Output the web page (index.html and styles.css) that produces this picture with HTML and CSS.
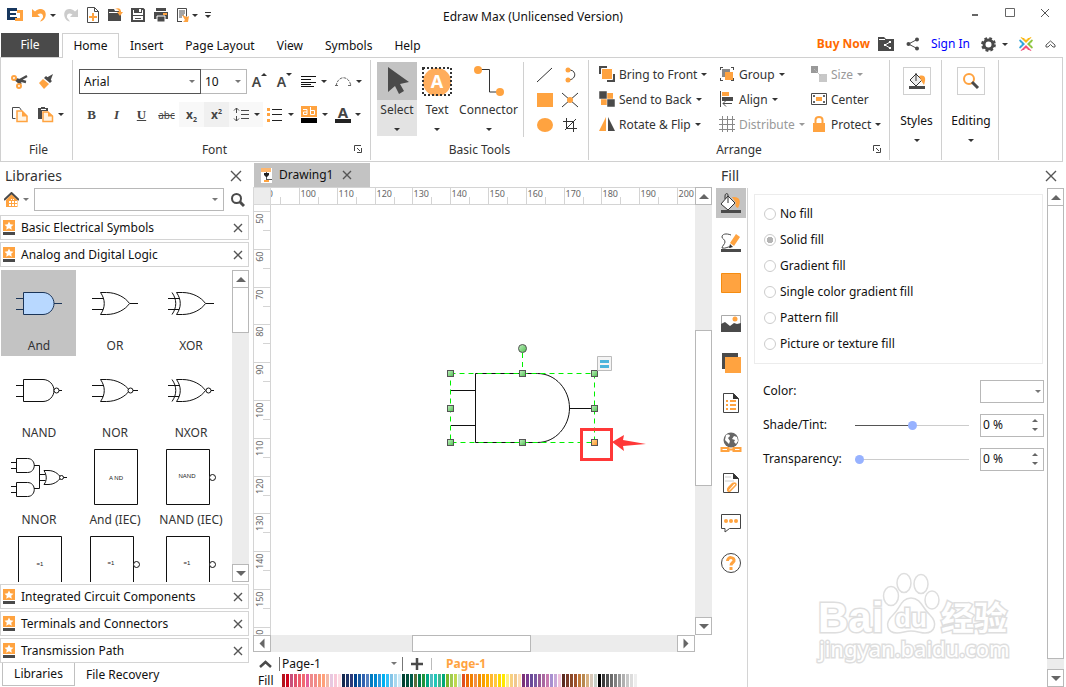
FILE: index.html
```html
<!DOCTYPE html>
<html lang="en">
<head>
<meta charset="utf-8">
<title>Edraw Max (Unlicensed Version)</title>
<link rel="stylesheet" href="styles.css">
</head>
<body>
<header class="titlebar">
  <div class="quick">
    <svg width="17" height="16"><path d="M0 1h10v3H3v2h6v2H3v2h7v3H0z" fill="#17375e"/><path d="M10 3h6v11h-8v-3h5V6h-3z" fill="#ffa340"/></svg>
    <button class="tool wide" aria-label="Undo"><svg width="17" height="16"><path d="M1 2v8h8L6.500 7.500c3-2 6-1 5.500 3l-3 4c7-1 8-12 1-12.500-2 0-4 .5-6 2.500z" fill="#ffa340"/></svg><i class="caret"></i></button>
    <button class="tool" aria-label="Redo"><svg width="16" height="16"><path d="M15 2v8H7l2.500-2.500c-3-2-6-1-5.500 3l3 4C0 13.500-1 2.500 6 2c2 0 4 .5 6 2.500z" fill="#ccc"/></svg></button>
    <button class="tool" aria-label="New"><svg width="14" height="16" fill="none" stroke="#4a4a4a"><path d="M1.500 .5h7l4 4v11h-11z M8.500 .5v4h4"/><path d="M7 6v8M3 10h8" stroke="#ffa340" stroke-width="2"/></svg></button>
    <button class="tool" aria-label="Open"><svg width="16" height="16"><path d="M1 2h6l1 2h6v10H1z" fill="#4a4a4a"/><path d="M2 5h10v1H2z" fill="#fff"/><path d="M8 2c4-2 6 0 6 3h2l-3 4-3-4h2c0-2-1-3-4-3z" fill="#ffa340"/></svg></button>
    <button class="tool" aria-label="Save"><svg width="16" height="16"><path d="M2 2h11l1 1v11H2z" fill="none" stroke="#4a4a4a" stroke-width="2"/><path d="M4 1h8v5H4zM3 8h10v1H3zM5 11h6v1H5z" fill="#4a4a4a"/><path d="M9 2h2v3H9z" fill="#fff"/></svg></button>
    <button class="tool" aria-label="Print"><svg width="16" height="16"><path d="M1 5h14v7H1zM3 1h10v3H3z" fill="#4a4a4a"/><path d="M4 9h8v6H4z" fill="#4a4a4a" stroke="#fff"/><path d="M10 6h4v2h-4z" fill="#ffa340"/></svg></button>
    <button class="tool wide" aria-label="Export"><svg width="14" height="16"><path d="M1.500 14.500v-13h9v8" fill="none" stroke="#4a4a4a"/><path d="M3 4h6M3 6h6M3 8h5M3 10h3M1 14.500h5" stroke="#4a4a4a"/><path d="M6 8l5 2 2-1-1 6H7l2-2z" fill="#ffa340"/></svg><i class="caret"></i></button>
    <button class="tool more" aria-label="Customize"><i class="caret"></i></button>
  </div>
  <h1>Edraw Max (Unlicensed Version)</h1>
  <div class="winbtns">
    <button class="tool" aria-label="Minimize"><svg width="10" height="10"><path d="M2 7h6" stroke="#666" stroke-width="2"/></svg></button>
    <button class="tool" aria-label="Maximize"><svg width="10" height="10"><path d="M.5.500h9v8h-9z" fill="none" stroke="#666"/></svg></button>
    <button class="tool" aria-label="Close"><svg width="10" height="10"><path d="M1 1l8 8M9 1l-8 8" stroke="#555"/></svg></button>
  </div>
</header>

<nav class="tabs">
  <button class="tab file">File</button>
  <button class="tab on">Home</button>
  <button class="tab">Insert</button>
  <button class="tab">Page Layout</button>
  <button class="tab">View</button>
  <button class="tab">Symbols</button>
  <button class="tab">Help</button>
  <div class="account">
    <a class="buy" href="#">Buy Now</a>
    <svg width="17" height="15"><path d="M0 0h6l2 2h8v12H0z" fill="#4a4a4a"/><path d="M1 2.500h6" stroke="#fff"/><path d="M12 5L7 8l5 3" stroke="#fff" fill="none"/><path d="M11 4h2v2h-2zM6 7h2v2H6zM11 10h2v2h-2z" fill="#fff"/></svg>
    <svg width="14" height="14"><path d="M11 2.500L2.500 7l8.500 4.500" fill="none" stroke="#4a4a4a"/><circle cx="11" cy="2.500" r="2" fill="#4a4a4a"/><circle cx="2.500" cy="7" r="2" fill="#4a4a4a"/><circle cx="11" cy="11.500" r="2" fill="#4a4a4a"/></svg>
    <a class="sign" href="#">Sign In</a>
    <button class="tool gear" aria-label="Settings"><svg width="15" height="15"><circle cx="7.500" cy="7.500" r="4.500" fill="none" stroke="#4a4a4a" stroke-width="3"/><circle cx="7.500" cy="7.500" r="6.200" fill="none" stroke="#4a4a4a" stroke-width="2.400" stroke-dasharray="2.700 2.170"/></svg><i class="caret"></i></button>
    <svg width="16" height="16"><path d="M3 1l2 1h6l2-1 1 2-6 5-6-5z" fill="#fdb813"/><path d="M1 4l3-1 4 5-4 5-3-1 1-2V6z" fill="#2fa5dc"/><path d="M15 4l-3-1-4 5 4 5 3-1-1-2V6z" fill="#8cc63f"/><path d="M3 15l2-1h6l2 1 1-2-6-5-6 5z" fill="#f0507a"/><path d="M2 2l12 12M14 2L2 14" stroke="#fff" stroke-width="1.500"/><circle cx="8" cy="2" r="1.800" fill="#fff"/><circle cx="2" cy="8" r="1.800" fill="#fff"/><circle cx="14" cy="8" r="1.800" fill="#fff"/><circle cx="8" cy="14" r="1.800" fill="#fff"/></svg>
    <button class="tool" aria-label="Collapse ribbon"><svg width="11" height="9" fill="none" stroke="#555"><path d="M1 5l4.500-4L10 5v2H8L5.500 4.500 3 7H1z"/></svg></button>
  </div>
</nav>

<section class="ribbon">
  <div class="group g-file">
    <div class="rows">
      <div class="row">
        <button class="tool c26" aria-label="Cut"><svg width="17" height="17"><path d="M16 3l-9 5M15 9L4 6l6 5" stroke="#4a4a4a" stroke-width="2.400" fill="none"/><circle cx="3" cy="5" r="2" fill="none" stroke="#ffa340" stroke-width="2"/><circle cx="8" cy="13" r="2" fill="none" stroke="#ffa340" stroke-width="2"/></svg></button>
        <button class="tool c26" aria-label="Format painter"><svg width="17" height="17"><path d="M15 1l-3 8-4-4z" fill="#4a4a4a"/><path d="M8 3l6 5-2 2-6-5z" fill="#4a4a4a"/><path d="M5 6l6 5-5 5-5-6z" fill="#ffa340"/></svg></button>
      </div>
      <div class="row">
        <button class="tool c26" aria-label="Copy"><svg width="17" height="17"><path d="M4.500 12.500h-3v-11h7l2 3" fill="none" stroke="#4a4a4a"/><path d="M6 5h5l5 5v5.500H6z" fill="#fff3e2" stroke="#ffa340" stroke-width="1.500"/><path d="M11 5v5.500h5.500z" fill="#ffa340"/></svg></button>
        <button class="tool c34" aria-label="Paste"><svg width="17" height="17"><path d="M1 2h3V1h4v1h3v3H5v8H1z" fill="#4a4a4a"/><path d="M4 3.500h5" stroke="#fff"/><path d="M6 6h5l4.500 4v5.500H6z" fill="#fff3e2" stroke="#ffa340" stroke-width="1.500"/><path d="M11 6v4.500h5z" fill="#ffa340"/></svg><i class="caret"></i></button>
      </div>
    </div>
    <div class="cap">File</div>
  </div>

  <div class="group g-font">
    <div class="rows">
      <div class="row">
        <span class="pick face"><select aria-label="Font"><option>Arial</option></select></span><span class="pick size"><select aria-label="Font size"><option>10</option></select></span>
        <button class="tool c25 gl" aria-label="Grow font"><b>A</b><i class="caret up"></i></button>
        <button class="tool c25 gl" aria-label="Shrink font"><b>A</b><i class="caret"></i></button>
        <button class="tool c34" aria-label="Align text"><svg width="16" height="14"><path d="M0 1.500h15M0 4.500h10M0 7.500h15M0 9.500h10M0 11.500h13" stroke="#111"/></svg><i class="caret"></i></button>
        <button class="tool c34" aria-label="Text path"><svg width="17" height="12"><path d="M1 10C3 -1 14 -1 16 10M0 9.500h4M13 9.500h4" fill="none" stroke="#666" stroke-dasharray="3 1"/></svg><i class="caret"></i></button>
      </div>
      <div class="row">
        <button class="tool c25 serif"><b>B</b></button>
        <button class="tool c25 serif"><em>I</em></button>
        <button class="tool c25 serif"><u>U</u></button>
        <button class="tool c25 strike"><s>abc</s></button>
        <button class="tool c25 sc t1"><b>x<sub>2</sub></b></button>
        <button class="tool c25 sc t2"><b>x<sup>2</sup></b></button>
        <button class="tool c34 t1" aria-label="Line spacing"><svg width="17" height="15"><path d="M3.500 1v5M3.500 9v5M1 3.500l2.500-2.500L6 3.500M1 11.500L3.500 14 6 11.500M8 3.500h8M8 7.500h8M8 11.500h8" fill="none" stroke="#4a4a4a"/></svg><i class="caret"></i></button>
        <button class="tool c34" aria-label="Bullets"><svg width="17" height="14"><path d="M0 0h3v3H0zM0 5h3v3H0zM0 11h3v3H0z" fill="#ffa340"/><path d="M5 1.500h10M5 6.500h10M5 12.500h10" stroke="#222"/></svg><i class="caret"></i></button>
        <button class="tool c34" aria-label="Highlight"><svg width="17" height="17"><path d="M0 0h16v11H0z" fill="#ffa340"/><path d="M0 12h16v5H0z" fill="#000"/><path d="M2 3.500h4v5H2.500v-2.500H6M9.500 1v7.500h4v-4h-4" fill="none" stroke="#fff"/></svg><i class="caret"></i></button>
        <button class="tool c34 fc" aria-label="Font color"><b>A</b><i class="caret"></i></button>
      </div>
    </div>
    <div class="cap">Font</div>
    <button class="tool launch" aria-label="Font dialog"><svg width="8" height="8"><path d="M.5 6V.5H7M3 3l3 3M7.500 3v4.500H3" fill="none" stroke="#444"/></svg></button>
  </div>

  <div class="group g-basic">
    <div class="big-row">
      <button class="big w40 sel"><svg width="26" height="32"><path d="M4 2v25l7-6 4 8 5-3-4-7 9-2z" fill="#4a4a4a"/></svg><span>Select</span><i class="caret"></i></button>
      <button class="big w40"><svg width="32" height="32"><circle cx="16" cy="17" r="14" fill="#ffad5c"/><path d="M2 3h28v27H2z" fill="none" stroke="#333" stroke-width="2" stroke-dasharray="2 2"/><text x="16" y="23" text-anchor="middle" class="bigA">A</text></svg><span>Text</span><i class="caret"></i></button>
      <button class="big w63"><svg width="32" height="32"><path d="M5 4.500h11.500V27H27" fill="none" stroke="#333"/><circle cx="5" cy="5" r="4" fill="#ffa340"/><circle cx="27" cy="27" r="4" fill="#ffa340"/></svg><span>Connector</span><i class="caret"></i></button>
      <div class="shapes">
        <button class="tool" aria-label="Line"><svg width="16" height="16"><path d="M0 15L15 1" stroke="#333"/></svg></button>
        <button class="tool" aria-label="Arc"><svg width="16" height="16"><path d="M6 3c9-1 9 10 0 10" fill="none" stroke="#333"/><circle cx="6" cy="3" r="2.500" fill="#ffa340"/><circle cx="6" cy="13" r="2.500" fill="#ffa340"/></svg></button>
        <button class="tool" aria-label="Rectangle"><svg width="16" height="16"><path d="M0 1h16v14H0z" fill="#ffa340"/></svg></button>
        <button class="tool" aria-label="Connection point"><svg width="16" height="16"><path d="M0 1l16 14M16 1L0 15" stroke="#333"/><circle cx="8" cy="8" r="3" fill="#ffa340"/></svg></button>
        <button class="tool" aria-label="Ellipse"><svg width="16" height="16"><ellipse cx="8" cy="8" rx="8" ry="7" fill="#ffa340"/></svg></button>
        <button class="tool" aria-label="Crop"><svg width="16" height="16"><path d="M4.500 1v10.500H15M1 4.500h10.500V15M3 13L14 2" fill="none" stroke="#333"/></svg></button>
      </div>
    </div>
    <div class="cap">Basic Tools</div>
  </div>

  <div class="group g-arr">
    <div class="arr">
      <button class="cmd"><svg width="16" height="16"><path d="M0 0h8v8H0zM8 8h8v8H8z" fill="#4a4a4a"/><path d="M2.500 2.500h11v11h-11z" fill="#ffa340" stroke="#fff"/></svg>Bring to Front<i class="caret"></i></button>
      <button class="cmd"><svg width="16" height="16"><path d="M1 1h3v1H2v2H1zM12 1h3v3h-1V2h-2zM1 12h1v2h2v1H1zM14 12h1v3h-3v-1h2z" fill="#4a4a4a"/><path d="M3 3h8v8H3z" fill="#888"/><path d="M6 6h8v8H6z" fill="#ffa340"/></svg>Group<i class="caret"></i></button>
      <button class="cmd off"><svg width="16" height="16"><path d="M0 0h7v7H0z" fill="#999"/><path d="M8 8h8v8H8z" fill="#c8c8c8"/><path d="M3 3l7 7" stroke="#bbb" stroke-dasharray="2 1"/></svg>Size<i class="caret"></i></button>
      <button class="cmd"><svg width="16" height="16"><path d="M2 2h12v12H2z" fill="#ffa340"/><path d="M0 0h8v8H0zM8 8h8v8H8z" fill="#4a4a4a" stroke="#fff" stroke-width=".5"/></svg>Send to Back<i class="caret"></i></button>
      <button class="cmd"><svg width="16" height="16"><path d="M1.500 0v16M4 12.500h9M4 12.500l3-3M4 12.500l3 3" stroke="#4a4a4a"/><path d="M3 1h7v4H3z" fill="#ffa340"/><path d="M3 6h11v4H3z" fill="#4a4a4a"/></svg>Align<i class="caret"></i></button>
      <button class="cmd"><svg width="16" height="16"><path d="M.5 2.500h15v11H.5z" fill="none" stroke="#4a4a4a"/><path d="M5 6h6v4H5z" fill="#ffa340"/><path d="M2 4h2v2H2zM12 4h2v2h-2zM2 10h2v2H2zM12 10h2v2h-2z" fill="#666"/></svg>Center</button>
      <button class="cmd"><svg width="16" height="16"><path d="M0 15L7 1v14z" fill="#ffa340"/><path d="M9 1l7 14H9z" fill="#4a4a4a"/></svg>Rotate &amp; Flip<i class="caret"></i></button>
      <button class="cmd off"><svg width="16" height="16"><path d="M0 3.500h16M0 8.500h16M0 13.500h16M3.500 0v16M8.500 0v16M13.500 0v16" stroke="#888"/></svg>Distribute<i class="caret"></i></button>
      <button class="cmd"><svg width="16" height="16"><path d="M2 7h12v9H2z" fill="#ffa340"/><path d="M4.500 8V4c0-4 7-4 7 0v4" fill="none" stroke="#ffa340" stroke-width="2"/></svg>Protect<i class="caret"></i></button>
    </div>
    <div class="cap">Arrange</div>
    <button class="tool launch" aria-label="Arrange dialog"><svg width="8" height="8"><path d="M.5 6V.5H7M3 3l3 3M7.500 3v4.500H3" fill="none" stroke="#444"/></svg></button>
  </div>

  <button class="group drop w52"><span class="frame"><svg width="18" height="18"><path d="M8 2l6 6-6 6-6-6z" fill="#eee" stroke="#333"/><path d="M8 9V1" stroke="#333"/><path d="M11 4c7-2 7 3 5 9l-2-3z" fill="#ffa340"/><path d="M1 14h16v3H1z" fill="#4a4a4a"/></svg></span><span>Styles</span><i class="caret"></i></button>
  <button class="group drop w57"><span class="frame"><svg width="18" height="18"><circle cx="7" cy="7" r="5" fill="none" stroke="#ffa340" stroke-width="2"/><path d="M10 10l6 6" stroke="#4a4a4a" stroke-width="3"/></svg></span><span>Editing</span><i class="caret"></i></button>
</section>

<main class="work">
  <aside class="left">
    <div class="phead"><h2>Libraries</h2><button class="tool" aria-label="Close libraries"><svg class="x" width="12" height="12"><path d="M1 1l10 10M11 1L1 11"/></svg></button></div>
    <div class="search">
      <button class="tool home" aria-label="Home"><svg width="15" height="16"><path d="M7.500 2l6 6v7H2V8z" fill="#ffa340"/><path d="M0 8l7.500-7L15 8" fill="none" stroke="#4a4a4a" stroke-width="2"/><path d="M7 7h1v1H7zM9 7h1v1H9zM5 9h2v2H5zM8 9h2v2H8zM11 9h2v2h-2zM5 12h2v2H5zM8 12h2v2H8zM11 12h2v2h-2z" fill="#fff"/></svg><i class="caret"></i></button>
      <span class="pick grow"><input type="text" aria-label="Search libraries"></span>
      <button class="tool" aria-label="Search"><svg width="15" height="16"><circle cx="6.500" cy="6.500" r="4.500" fill="none" stroke="#4a4a4a" stroke-width="2"/><path d="M10 10l4 4" stroke="#4a4a4a" stroke-width="3"/></svg></button>
    </div>
    <div class="lib"><svg class="book" width="12" height="15"><use href="#book"/></svg><span>Basic Electrical Symbols</span><button class="tool" aria-label="Close"><svg class="x" width="8" height="8"><path d="M0 0l8 8M8 0L0 8"/></svg></button></div>
    <div class="lib"><svg class="book" width="12" height="15"><use href="#book"/></svg><span>Analog and Digital Logic</span><button class="tool" aria-label="Close"><svg class="x" width="8" height="8"><path d="M0 0l8 8M8 0L0 8"/></svg></button></div>
    <div class="stencils">
      <div class="cells">
        <button class="cell picked"><span><svg width="48" height="25" class="gate"><use href="#and"/></svg></span>And</button>
        <button class="cell"><span><svg width="48" height="25" class="gate"><use href="#or"/></svg></span>OR</button>
        <button class="cell"><span><svg width="48" height="25" class="gate"><use href="#or"/><path d="M5 1.500c5 7 5 15 0 22"/></svg></span>XOR</button>
        <button class="cell"><span><svg width="48" height="25" class="gate"><use href="#and"/><circle cx="41.500" cy="12.500" r="2.500"/></svg></span>NAND</button>
        <button class="cell"><span><svg width="48" height="25" class="gate"><use href="#or"/><circle cx="39.500" cy="12.500" r="2.500"/></svg></span>NOR</button>
        <button class="cell"><span><svg width="48" height="25" class="gate"><use href="#or"/><path d="M5 1.500c5 7 5 15 0 22"/><circle cx="41.500" cy="12.500" r="2.500"/></svg></span>NXOR</button>
        <button class="cell"><span><svg width="56" height="42" class="gate"><path d="M5.500 1.500h11c9 0 9 14 0 14h-11zM5.500 25.500h11c9 0 9 14 0 14h-11zM0 5.500h5M0 11.500h5M0 29.500h5M0 35.500h5M23 8.500h5.500v23H23M28.500 17.500h6M28.500 23.500h6M33 13.500h4c6 0 10 3 13 7-3 4-7 7-13 7h-4c3-4 3-9 0-14zM52 20.500h4"/><circle cx="50.500" cy="20.500" r="2"/></svg></span>NNOR</button>
        <button class="cell"><span><svg width="52" height="57" class="gate"><path d="M5.500.5h43v55h-43z"/><text x="27" y="31">A ND</text></svg></span>And (IEC)</button>
        <button class="cell"><span><svg width="52" height="57" class="gate"><path d="M1.500.5h43v55h-43z"/><circle cx="47.500" cy="28.500" r="3"/><text x="22" y="29">NAND</text></svg></span>NAND (IEC)</button>
        <button class="cell" aria-label="OR (IEC)"><span><svg width="52" height="57" class="gate"><path d="M5.500.5h43v56h-43z"/><text x="27" y="30">=1</text></svg></span></button>
        <button class="cell" aria-label="NOR (IEC)"><span><svg width="52" height="57" class="gate"><path d="M1.500.5h43v56h-43z"/><circle cx="47.500" cy="28.500" r="3"/><text x="22" y="29">=1</text></svg></span></button>
        <button class="cell" aria-label="NXOR (IEC)"><span><svg width="52" height="57" class="gate"><path d="M1.500.5h43v56h-43z"/><circle cx="47.500" cy="28.500" r="3"/><text x="22" y="29">=1</text></svg></span></button>
      </div>
      <div class="vbar"><button aria-label="Scroll up"><i class="tri up"></i></button><div class="thumb t-lib"></div><div class="fill"></div><button aria-label="Scroll down"><i class="tri"></i></button></div>
    </div>
    <div class="lib"><svg class="book" width="12" height="15"><use href="#book"/></svg><span>Integrated Circuit Components</span><button class="tool" aria-label="Close"><svg class="x" width="8" height="8"><path d="M0 0l8 8M8 0L0 8"/></svg></button></div>
    <div class="lib"><svg class="book" width="12" height="15"><use href="#book"/></svg><span>Terminals and Connectors</span><button class="tool" aria-label="Close"><svg class="x" width="8" height="8"><path d="M0 0l8 8M8 0L0 8"/></svg></button></div>
    <div class="lib"><svg class="book" width="12" height="15"><use href="#book"/></svg><span>Transmission Path</span><button class="tool" aria-label="Close"><svg class="x" width="8" height="8"><path d="M0 0l8 8M8 0L0 8"/></svg></button></div>
    <div class="ltabs"><button class="on">Libraries</button><button>File Recovery</button></div>
  </aside>

  <section class="center">
    <div class="doctab"><svg width="11" height="15"><path d="M0 0h11v15H0z" fill="#fff"/><path d="M0 0h10v4H0z" fill="#ffb870"/><path d="M5.500 4v4M5.500 9v3M6 11.500h5" fill="none" stroke="#555"/><path d="M3 5h5v2l-2 2H5L3 7z" fill="#222"/><path d="M3 12h5v2H3z" fill="#ffa340"/></svg><span>Drawing1</span><button class="tool" aria-label="Close drawing"><svg class="x" width="8" height="8"><path d="M0 0l8 8M8 0L0 8"/></svg></button></div>
    <div class="stage">
      <div class="corner"></div>
      <svg class="rule rx" id="rulerX" width="100%" height="18"></svg>
      <svg class="rule ry" id="rulerY" width="17" height="100%"></svg>
      <div class="canvas">
        <svg width="424" height="430">
          <defs>
            <linearGradient id="hg" x2="1" y2="1"><stop offset="0" stop-color="#c4f0c4"/><stop offset="1" stop-color="#4cc04c"/></linearGradient>
            <linearGradient id="ho" x2="1" y2="1"><stop offset="0" stop-color="#ffe0a0"/><stop offset="1" stop-color="#ff9020"/></linearGradient>
          </defs>
          <path d="M204.500 168.500h62c18 0 32 16 32 34.500s-14 34.500-32 34.500h-62zM180 185.500h24M180 220.500h24M299 203.500h24" fill="none" stroke="#111"/>
          <path d="M179.500 168.500h144v69h-144zM251.500 148v20" fill="none" stroke="#00f000" stroke-dasharray="5 4"/>
          <g stroke="#555">
            <circle cx="251.500" cy="143.500" r="4" fill="url(#hg)"/>
            <rect x="176.500" y="165.500" width="6" height="6" fill="url(#hg)"/>
            <rect x="248.500" y="165.500" width="6" height="6" fill="url(#hg)"/>
            <rect x="320.500" y="165.500" width="6" height="6" fill="url(#hg)"/>
            <rect x="176.500" y="200.500" width="6" height="6" fill="url(#hg)"/>
            <rect x="320.500" y="200.500" width="6" height="6" fill="url(#hg)"/>
            <rect x="176.500" y="234.500" width="6" height="6" fill="url(#hg)"/>
            <rect x="248.500" y="234.500" width="6" height="6" fill="url(#hg)"/>
            <rect x="320.500" y="234.500" width="6" height="6" fill="url(#ho)"/>
          </g>
          <path d="M326.500 151.500h14v14h-14z" fill="#f4f4f4" stroke="#bbb"/><path d="M329 155h9v3h-9zM329 160h9v3h-9z" fill="#4ab4dc"/>
          <path d="M310.500 224.500h30v30h-30z" fill="none" stroke="#ff3838" stroke-width="3"/>
          <path d="M341 237l12-7-1 5 23 4-23 2 1 5z" fill="#ff3838"/>
        </svg>
      </div>
      <div class="vbar tall"><button aria-label="Scroll up"><i class="tri up"></i></button><div class="fill f-a"></div><div class="thumb t-doc"></div><div class="fill f-b"></div><button aria-label="Scroll down"><i class="tri"></i></button></div>
      <div class="hbar"><button aria-label="Scroll left"><i class="tri lf"></i></button><div class="fill f-a"></div><div class="thumb t-h"></div><div class="fill f-b"></div><button aria-label="Scroll right"><i class="tri rt"></i></button></div>
    </div>
    <div class="pages">
      <button class="tool" aria-label="Show pages"><svg width="13" height="8"><path d="M1 7l5.500-5L12 7" fill="none" stroke="#4a4a4a" stroke-width="2.500"/></svg></button>
      <span class="pick page"><select aria-label="Page"><option>Page-1</option></select></span>
      <button class="tool plus" aria-label="Add page"><svg width="12" height="12"><path d="M6 0v12M0 6h12" stroke="#4a4a4a" stroke-width="2.500"/></svg></button>
      <button class="pg">Page-1</button>
    </div>
    <div class="colors"><span>Fill</span><div class="swatches" id="swatches"></div></div>
  </section>

  <aside class="right">
    <div class="phead"><h2>Fill</h2><button class="tool" aria-label="Close fill"><svg class="x" width="12" height="12"><path d="M1 1l10 10M11 1L1 11"/></svg></button></div>
    <div class="props">
      <div class="side">
        <button class="on" aria-label="Fill"><svg width="22" height="22"><path d="M8 4l7 7-7 7-7-6z" fill="#fff" stroke="#333"/><path d="M8 11V3c0-2-3-2-3 1v3" fill="none" stroke="#333"/><path d="M12 5c9-1 9 5 6 11-3-1-3-4-2-5z" fill="#ffa340"/><path d="M1 18h20v3H1z" fill="#4a4a4a"/></svg></button>
        <button aria-label="Line"><svg width="22" height="22"><path d="M11 3C6 1 2 2 2 5c0 2 3 2 3 5 0 2-3 4-3 6 4 1 6-2 9-1" fill="none" stroke="#4a4a4a"/><path d="M16 2l4 3-6 9-4-3z" fill="#ffa340"/><path d="M10 12l3 3-4 1z" fill="#333"/><path d="M1 17h20v3H1z" fill="#4a4a4a"/></svg></button>
        <button aria-label="Color"><svg width="22" height="22"><path d="M1.500 1.500h19v19h-19z" fill="#ffa340" stroke="#f58c10"/></svg></button>
        <button aria-label="Picture"><svg width="22" height="22"><path d="M1.500 3.500h19v16h-19z" fill="#fff" stroke="#aaa"/><path d="M1 20v-8l4-2 5 4 4-3 3 1 4-1v9z" fill="#4a4a4a"/><circle cx="15" cy="7" r="2.500" fill="#ffa340"/></svg></button>
        <button aria-label="Shadow"><svg width="22" height="22"><path d="M2 1h16v16H2z" fill="#4a4a4a"/><path d="M5 5h16v16H5z" fill="#ffa340"/></svg></button>
        <button aria-label="Properties"><svg width="22" height="22"><path d="M3.500 1.500h10l5 5v14h-15z" fill="#fff" stroke="#444"/><path d="M13 1v6h6z" fill="#333"/><path d="M6 9h2M10 9h6M6 13h2M10 13h6M6 17h2M10 17h6" stroke="#ffa340" stroke-width="2"/></svg></button>
        <button aria-label="Hyperlink"><svg width="22" height="22"><circle cx="11" cy="8" r="7.500" fill="#666"/><path d="M6 3c3-1 4 0 4 1l-2 2 2 3-1 3-4-4zM14 4l3 1 1 4-2 3-2-2 1-2-3-1z" fill="#fff"/><path d="M1.500 16h7v3h-7zM13.500 16h7v3h-7zM7 17.500h8" fill="none" stroke="#ffa340" stroke-width="2"/></svg></button>
        <button aria-label="Attachment"><svg width="22" height="22"><path d="M3.500 1.500h10l5 5v14h-15z" fill="#fff" stroke="#444"/><path d="M13 1v6h6z" fill="#333"/><path d="M5 5h6M5 9h9" stroke="#ccc"/><path d="M8 18l6-7c3 0 2 2 1 3l-5 5c-3 1-3-2-1-4l4-4" fill="none" stroke="#ffa340" stroke-width="1.500"/></svg></button>
        <button aria-label="Comment"><svg width="22" height="22"><path d="M1.500 2.500h19v14h-11L5 20v-3.500H1.500z" fill="#fff" stroke="#444"/><circle cx="6" cy="9" r="2" fill="#ffa340"/><circle cx="11" cy="9" r="2" fill="#ffa340"/><circle cx="16" cy="9" r="2" fill="#ffa340"/></svg></button>
        <button aria-label="Help"><svg width="22" height="22"><circle cx="11" cy="11" r="9.500" fill="#fff" stroke="#444"/><path d="M7.500 9c0-5 7.500-4 6.500 0-1 2-3 2-3 4.500M11 15v3" fill="none" stroke="#ffa340" stroke-width="3"/></svg></button>
      </div>
      <form class="pane">
        <div class="opts">
          <label><input type="radio" name="fill">No fill</label>
          <label><input type="radio" name="fill" checked>Solid fill</label>
          <label><input type="radio" name="fill">Gradient fill</label>
          <label><input type="radio" name="fill">Single color gradient fill</label>
          <label><input type="radio" name="fill">Pattern fill</label>
          <label><input type="radio" name="fill">Picture or texture fill</label>
        </div>
        <div class="field"><label for="color">Color:</label><i></i><span class="pick col"><select id="color"><option></option></select></span></div>
        <div class="field"><label for="tint">Shade/Tint:</label><input id="tint" class="half" type="range" value="50"><span class="spin"><input type="text" aria-label="Shade value" value="0 %"><span><i class="caret up"></i><i class="caret"></i></span></span></div>
        <div class="field"><label for="trans">Transparency:</label><input id="trans" type="range" value="0"><span class="spin"><input type="text" aria-label="Transparency value" value="0 %"><span><i class="caret up"></i><i class="caret"></i></span></span></div>
      </form>
      <div class="vbar edge"><button aria-label="Scroll up"><i class="tri up"></i></button><div class="thumb t-fill"></div><div class="fill f-c"></div><button aria-label="Scroll down"><i class="tri"></i></button></div>
    </div>
    <svg class="mark" width="200" height="96">
      <g fill="#fff" stroke="#dedede" stroke-width="3">
        <text x="2" y="59" class="m1">Bai</text>
        <g stroke-width="1.500"><ellipse cx="75" cy="23" rx="7.500" ry="9.500"/><ellipse cx="88" cy="10" rx="7" ry="9.500"/><ellipse cx="105" cy="11" rx="7" ry="9.500"/><ellipse cx="116" cy="27" rx="7" ry="9"/>
        <path d="M95 25c-10 0-11 11-18 17-9 8-6 18 4 18 6 0 8-2 14-2s10 2 14 2c10 0 13-10 5-18-7-6-9-17-19-17z"/></g>
        <text x="79" y="54" class="m2">du</text>
        <text x="125" y="57" class="m3">经验</text>
        <text x="3" y="84" class="m4">jingyan.baidu.com</text>
      </g>
    </svg>
  </aside>
</main>

<svg class="defs" width="0" height="0">
  <symbol id="book" viewBox="0 0 12 15"><path d="M0 0h12v11H0z" fill="#ffa340"/><path d="M0 12h12v3H0z" fill="#4a4a4a"/><path d="M6 1.500l1.300 2.800 3.200.4-2.300 2.100.6 3L6 8.300 3.200 9.800l.6-3L1.500 4.700l3.200-.4z" fill="#fff"/></symbol>
  <symbol id="and" viewBox="0 0 48 25"><path d="M8.500 1.500H28c6 0 11 5 11 11s-5 11-11 11H8.500z"/><path d="M1 7.500h7M1 18.500h7M39 12.500h8"/></symbol>
  <symbol id="or" viewBox="0 0 48 25"><path d="M9.500 1.500h6c10 0 19 5 23 11-4 6-13 11-23 11h-6c5-7 5-15 0-22zM1 7.500h11M1 18.500h11M39 12.500h8"/></symbol>
</svg>
<script src="script.js"></script>
</body>
</html>
```
FILE: styles.css
```css
* { box-sizing: border-box; }
body { margin: 0; min-height: 100vh; display: flex; flex-direction: column; background: #fff; color: #333; font: 12px/18px "Noto Sans", "Noto Sans CJK SC", sans-serif; }
button { font: inherit; color: inherit; background: none; border: 0; padding: 0; margin: 0; cursor: default; white-space: nowrap; }
input, select { font: inherit; color: #111; }
svg { display: block; flex: none; }
a { text-decoration: none; }
h1, h2 { margin: 0; font-weight: 400; }
.defs { position: absolute; }

.caret { flex: none; width: 0; height: 0; border: 3px solid transparent; border-top-color: #333; border-bottom: 0; }
.caret.up { transform: rotate(180deg); }
.tool { display: flex; align-items: center; justify-content: center; gap: 4px; }
.x { fill: none; stroke: #555; stroke-width: 1.4; overflow: visible; }
.pick { position: relative; display: flex; height: 23px; border: 1px solid #b8b8b8; background: #fff; }
.pick select, .pick input { appearance: none; width: 100%; border: 0; background: none; padding: 0 4px; outline: 0; border-radius: 0; }
.pick::after { content: ""; position: absolute; right: 5px; top: 9px; border: 3px solid transparent; border-top-color: #777; border-bottom: 0; pointer-events: none; }

.titlebar { display: grid; grid-template-columns: 1fr auto 1fr; align-items: center; height: 33px; }
.titlebar h1 { font-size: 12px; color: #111; }
.quick { display: flex; align-items: center; gap: 7px; padding: 0 0 3px 7px; }
.quick .wide { gap: 2px; }
.more { border-top: 1px solid #333; padding-top: 2px; }
.winbtns { display: flex; justify-content: flex-end; gap: 25px; padding: 0 16px 7px 0; }

.tabs { display: flex; height: 25px; margin-bottom: -1px; position: relative; color: #111; }
.tab { padding: 0 11px; line-height: 24px; }
.tab.file { width: 58px; margin: 0 3px 1px 1px; background: #4a4a4a; color: #fff; }
.tab.on { border: 1px solid #d0d0d0; border-bottom: 0; background: #fff; width: 57px; padding: 0; }
.account { display: flex; align-items: center; gap: 11px; margin-left: auto; padding: 0 10px 3px 0; }
.buy { color: #ff6a00; font-weight: 700; }
.buy + svg { margin-left: -3px; }
.sign { color: #00f; }
.gear { gap: 6px; margin-right: -1px; }

.ribbon { display: flex; height: 105px; margin-right: 3px; border: 1px solid #d0d0d0; }
.group { position: relative; display: flex; flex-direction: column; border-right: 1px solid #d0d0d0; margin: 2px 0 1px; padding-top: 2px; }
.cap { margin-top: auto; height: 19px; text-align: center; }
.launch { position: absolute; right: 8px; bottom: 7px; }
.rows { display: flex; flex-direction: column; gap: 8px; padding-top: 7px; }
.row { display: flex; align-items: center; height: 25px; }
.g-file { width: 72px; }
.g-file .row { padding-left: 5px; }
.g-font { width: 298px; }
.g-font .row { padding-left: 6px; }
.g-font .cap { padding-right: 14px; }
.g-file .cap { padding-left: 4px; }
.c25 { width: 25px; height: 25px; flex: none; color: #444; }
.c26 { width: 27px; height: 25px; }
.c34 { width: 34px; height: 25px; flex: none; color: #444; }
.face { width: 122px; height: 25px; border-color: #555; }
.size { width: 46px; height: 25px; border-left: 0; }
.face::after, .size::after { top: 10px; }
.gl { gap: 0; font-size: 14px; align-items: flex-start; padding-top: 4px; }
.gl b { font-weight: 600; }
.serif { font: 13px/20px "Liberation Serif", serif; }
.serif u { font-weight: 700; }
.serif em { font-weight: 700; }
.strike { font-size: 10px; }
.sc { font: 12px/20px "Noto Sans", sans-serif; }
.sc sub, .sc sup { font-size: 7px; line-height: 1px; }
.t1 { background: #f8f8f8; }
.t2 { background: #f0f0f0; }
.fc b { width: 16px; font-size: 15px; line-height: 13px; border-bottom: 4px solid #222; }

.g-basic { width: 218px; }
.big-row { display: flex; padding-left: 6px; }
.big { display: flex; flex-direction: column; align-items: center; height: 74px; color: #333; }
.big svg { height: 32px; margin-top: 3px; }
.big span { margin-top: 4px; }
.big .caret { margin-top: 9px; }
.w40 { width: 40px; }
.w63 { width: 63px; }
.sel { background: linear-gradient(#c3c3c3 38px, #e3e3e3 38px); }
.bigA { font: 700 18px "Noto Sans", sans-serif; fill: #fff; }
.shapes { display: grid; grid-template-columns: 16px 16px; grid-auto-rows: 25px; column-gap: 9px; border-left: 1px solid #d0d0d0; margin-left: 3px; padding-left: 13px; }
.g-arr { width: 301px; }
.arr { display: grid; grid-template-columns: 120px 92px auto; grid-auto-rows: 25px; padding-left: 10px; }
.cmd { display: flex; align-items: center; gap: 4px; }
.cmd svg { height: 17px; }
.off { color: #999; }
.off .caret { border-top-color: #999; }
.drop { align-items: center; color: #111; padding-top: 7px; }
.w52 { width: 52px; padding-left: 2px; }
.w57 { width: 57px; padding-left: 2px; }
.frame { display: grid; place-items: center; width: 28px; height: 28px; border: 1px solid #d0d0d0; margin-bottom: 17px; }
.drop .caret { margin-top: 9px; }

.work { flex: 1; display: flex; min-height: 525px; color: #111; }
.phead { display: flex; align-items: center; justify-content: space-between; height: 26px; padding: 2px 7px 0 5px; }
.phead h2 { font-size: 14px; color: #333; }
.left { width: 249px; margin-right: 4px; display: flex; flex-direction: column; }
.search { display: flex; align-items: center; gap: 6px; height: 23px; padding: 0 4px; margin-bottom: 4px; }
.home .caret { border-top-color: #777; }
.home { width: 24px; }
.grow { flex: 1; }
.lib { display: flex; align-items: center; height: 25px; flex: none; border: 1px solid #d4d4d4; padding: 0 6px 0 2px; gap: 6px; margin-bottom: 2px; }
.lib span { flex: 1; }
.stencils { display: flex; flex: 1 1 0px; min-height: 200px; margin: 1px 0 2px; }
.cells { flex: 1; display: grid; grid-template-columns: repeat(3, 76px); grid-auto-rows: 86px; row-gap: 1px; padding-left: 1px; overflow: hidden; color: #333; }
.cell { display: flex; flex-direction: column; align-items: center; }
.cell span { display: grid; place-items: center; height: 67px; }
.picked { background: linear-gradient(90deg, #c3c3c3 75px, #fff 75px); }
.gate { fill: none; stroke: #111; overflow: visible; }
.picked .gate { fill: #b8d8ff; stroke: #1a3458; }
.gate circle { fill: #fff; }
.gate text { fill: #222; stroke: none; font: 6px "Liberation Sans", sans-serif; text-anchor: middle; }
.ltabs { display: flex; height: 24px; padding: 0 2px 1px; margin-top: -2px; }
.ltabs button { padding: 0 11px; }
.ltabs .on { border: 1px solid #c0c0c0; border-top: 0; padding: 0; width: 73px; }

.vbar { display: flex; flex-direction: column; width: 17px; flex: none; background: #ececec; }
.vbar button, .hbar button { display: grid; place-items: center; width: 17px; height: 18px; flex: none; border: 1px solid #b8b8b8; background: #fff; }
.thumb { border: 1px solid #b8b8b8; background: #fff; flex: none; }
.vbar .thumb { margin-top: -1px; }
.fill { flex: 1; }
.tri { width: 0; height: 0; border: 5px solid transparent; border-top-color: #666; border-bottom: 0; }
.tri.up { transform: rotate(180deg); }
.tri.lf { transform: rotate(90deg); }
.tri.rt { transform: rotate(-90deg); }
.t-lib { height: 46px; }
.t-doc { height: 156px; }
.t-h { width: 119px; }
.vbar .t-fill { flex: 1; }
.vbar .f-c { flex: 0 0 10px; }
.tall .f-a { flex: 126; }
.tall .f-b { flex: 131; }
.hbar .f-a { flex: 142; }
.hbar .f-b { flex: 147; }

.center { flex: 1; min-width: 0; display: flex; flex-direction: column; }
.doctab { display: flex; align-items: center; gap: 7px; width: 116px; height: 24px; margin: 1px 0 0 1px; padding-left: 7px; background: #c3c3c3; }
.doctab .tool { margin-left: 3px; }
.stage { flex: 1; display: grid; grid-template-columns: 18px 1fr 17px; grid-template-rows: 18px 1fr 17px; grid-template-areas: "corner rx v" "ry canvas v" "h h none"; }
.corner { grid-area: corner; background: #ececec; border: 1px solid #d8d8d8; }
.rule text { font: 9px "Noto Sans", sans-serif; fill: #666; }
.rule path { stroke: #d4d4d4; fill: none; }
.rx { grid-area: rx; border-top: 1px solid #d4d4d4; border-bottom: 1px solid #d4d4d4; }
.ry { grid-area: ry; border-right: 1px solid #d4d4d4; border-left: 1px solid #d4d4d4; height: 100%; width: 18px; contain: size; }
.canvas { grid-area: canvas; overflow: hidden; }
.tall { grid-area: v; }
.hbar { grid-area: h; display: flex; background: #ececec; }
.hbar button { width: 18px; height: 17px; }
.pages { display: flex; align-items: center; height: 22px; padding: 2px 0 0 6px; }
.page { width: 124px; height: 14px; margin-left: 7px; border-width: 0 1px; border-color: #777; }
.page select { padding: 0 2px; line-height: 14px; }
.page::after { top: 5px; }
.plus { width: 29px; height: 12px; border-right: 1px solid #bbb; margin-right: 14px; }
.pg { color: #ffa340; font-weight: 700; }
.colors { display: flex; height: 13px; padding-left: 5px; gap: 8px; line-height: 13px; }
.swatches { display: flex; gap: 1px; }
.swatches i { width: 3px; }

.right { position: relative; width: 354px; padding-left: 4px; display: flex; flex-direction: column; }
.right .phead { padding-right: 9px; }
.props { flex: 1; display: flex; }
.side { width: 32px; border-right: 1px solid #d4d4d4; display: flex; flex-direction: column; gap: 10px; }
.side button { display: grid; place-items: center; width: 30px; height: 30px; }
.side .on { background: #c3c3c3; }
.pane { flex: 1; padding: 6px 4px 0 6px; }
.opts { border: 1px solid #ececec; padding: 6px 9px; margin-bottom: 10px; }
.opts label { display: flex; align-items: center; gap: 4px; height: 26px; }
.opts input { appearance: none; width: 12px; height: 12px; margin: 0; border: 1px solid #ccc; border-radius: 50%; }
.opts input:checked { background: radial-gradient(#b4b4b4 3px, #fff 3px); }
.field { display: grid; grid-template-columns: 92px 114px 1fr; align-items: center; height: 34px; padding-left: 9px; }
.col, .spin { margin: 0 -1px 0 11px; }
.spin { display: flex; height: 23px; border: 1px solid #b8b8b8; }
.spin > input { width: 0; flex: 1; border: 0; padding: 0 2px; outline: 0; background: none; }
.spin > span { display: flex; flex-direction: column; justify-content: center; gap: 6px; padding-right: 5px; }
.spin .caret { border-top-color: #666; }
.pick.col::after { right: 2px; }
input[type=range] { appearance: none; width: 100%; height: 10px; margin: 0; background: linear-gradient(#ccc, #ccc) 0 5px / 100% 1px no-repeat; }
input.half { background: linear-gradient(90deg, #555 50%, #ccc 50%) 0 5px / 100% 1px no-repeat; }
input[type=range]::-webkit-slider-thumb { appearance: none; width: 9px; height: 9px; border-radius: 50%; background: #97b2ff; }
.edge { margin-right: 2px; }
.mark { position: absolute; right: 50px; bottom: 18px; overflow: visible; pointer-events: none; }
.mark text { paint-order: stroke; }
.m1 { font: 700 42px "Liberation Sans", sans-serif; }
.m2 { font: 700 26px "Liberation Sans", sans-serif; }
.m3 { font: 700 33px "Noto Sans CJK SC", sans-serif; }
.m4 { font: 22px "Noto Sans", sans-serif; }
```
FILE: script.js
```js
const NS = 'http://www.w3.org/2000/svg';
const STEP = 37.8;

function add(parent, tag, attrs, text) {
  const el = document.createElementNS(NS, tag);
  for (const k in attrs) el.setAttribute(k, attrs[k]);
  if (text !== undefined) el.textContent = text;
  parent.appendChild(el);
}

const rx = document.getElementById('rulerX');
const ry = document.getElementById('rulerY');
const spanX = rx.getBoundingClientRect().width;
const spanY = ry.getBoundingClientRect().height;

for (let i = 0; 28 + i * STEP < spanX; i++) {
  const x = Math.round(28 + i * STEP) + 0.5;
  const mid = Math.round(28 + (i + 0.5) * STEP) + 0.5;
  add(rx, 'path', { d: `M${x} 0v18M${mid} 9v9` });
  add(rx, 'text', { x: x + 1, y: 9 }, 100 + i * 10);
}
add(rx, 'path', { d: 'M9.5 9v9' });
add(rx, 'text', { x: 2, y: 9, 'text-anchor': 'end' }, 90);

for (let i = 0; 6 + i * STEP < spanY; i++) {
  const y = Math.round(6 + i * STEP) + 0.5;
  const mid = Math.round(6 + (i + 0.5) * STEP) + 0.5;
  add(ry, 'path', { d: `M0 ${y}h18M9 ${mid}h9` });
  add(ry, 'text', { transform: `translate(9 ${y + 2}) rotate(-90)`, 'text-anchor': 'end' }, 50 + i * 10);
}

const colors = ('b5121b d0021b c8507a e0506a ee5a6a f06a70 e8609a ee8a8a f28a8a f89a7a ffa07a f4b8a8 e8c8e0 f8c8d8 ffdce4 ' +
  '14284f 1f3468 2c3a78 00428c 1a5aa0 2f62b0 5580c0 007ac0 0088d0 2a9ae0 00b0f0 30c0f8 84c4e8 a8d8ee cceaf8 ' +
  '004030 00503a 005a4a 5a6e3a 007a4a 20923a 00a886 50bcc0 20c8b8 40b890 00a878 7ab82a a0cc50 c0d850 cce8cc ' +
  'e05020 ee6a00 f08000 f0904a f09000 f8a000 ffb000 ffb830 ffc840 ffd800 ffe800 fff080 f8d080 f0c890 ffdcb0 ' +
  '7a3078 7a3a90 6a4a98 7a58a0 9a5a98 a868a0 c87ab0 a890d0 c8a8d8 f0c0dc ' +
  '5a2a20 7a3a28 8a4828 a0522d c07838 b88850 d8b080 d8c8b8 c8d0c8 ' +
  '000000 3a3a3a 555555 6a6a6a 808080 999999 b0b0b0 c8c8c8 dcdcdc eeeeee').split(' ');
const box = document.getElementById('swatches');
for (const c of colors) {
  const i = document.createElement('i');
  i.style.background = '#' + c;
  box.appendChild(i);
}
```
